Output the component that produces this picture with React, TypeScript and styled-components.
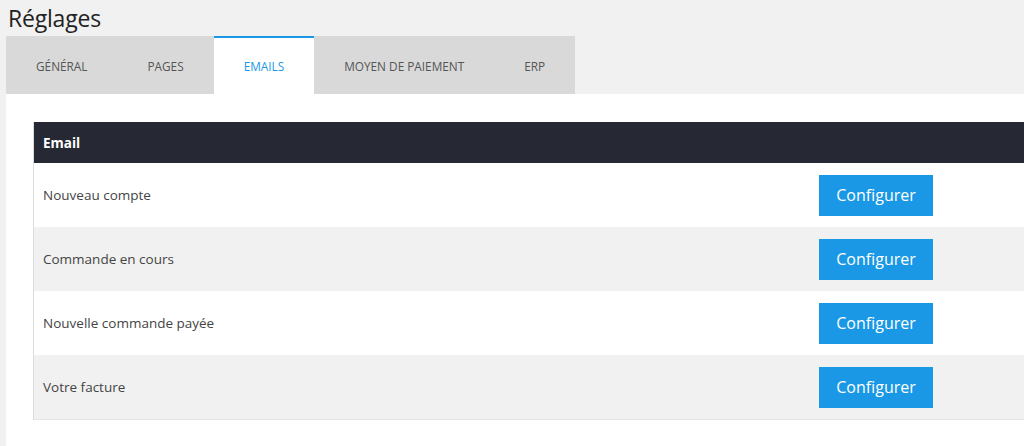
import styled, { createGlobalStyle } from "styled-components";

const GlobalStyle = createGlobalStyle`
  html, body {
    margin: 0;
    padding: 0;
    background: #f1f1f1;
    overflow: hidden;
  }
  body {
    font-family: "Open Sans", "Noto Sans", "Liberation Sans", sans-serif;
    color: #444;
  }
`;

const tabs = ["Général", "Pages", "Emails", "Moyen de paiement", "ERP"];

const emails = [
  "Nouveau compte",
  "Commande en cours",
  "Nouvelle commande payée",
  "Votre facture",
];

const App = () => {
  return (
    <>
      <GlobalStyle />
      <Page>
        <Title>Réglages</Title>

        <TabBar>
          {tabs.map((tab) => (
            <Tab key={tab} $active={tab === "Emails"}>
              {tab}
            </Tab>
          ))}
        </TabBar>

        <Panel>
          <Table>
            <HeaderRow>
              <HeaderCell>Email</HeaderCell>
              <HeaderCell />
            </HeaderRow>
            {emails.map((label, i) => (
              <Row key={label} $odd={i % 2 === 1}>
                <Cell>{label}</Cell>
                <Cell>
                  <ConfigButton type="button">Configurer</ConfigButton>
                </Cell>
              </Row>
            ))}
          </Table>
        </Panel>
      </Page>
    </>
  );
};

export default App;

const Page = styled.div`
  display: flex;
  flex-direction: column;
  padding: 0 0 0 6px;
  min-height: 446px;
`;

const Title = styled.h1`
  margin: 0;
  padding: 4px 0 0 2px;
  height: 36px;
  box-sizing: border-box;
  font-size: 23px;
  font-weight: 400;
  line-height: 28px;
  color: #222;
  letter-spacing: -0.2px;
`;

const TabBar = styled.div`
  display: flex;
  align-self: flex-start;
  background: #d9d9d9;
`;

const Tab = styled.div<{ $active?: boolean }>`
  height: 58px;
  box-sizing: border-box;
  padding: 0 30px;
  display: flex;
  align-items: center;
  font-size: 11.8px;
  text-transform: uppercase;
  color: ${(p) => (p.$active ? "#1a98e6" : "#555")};
  background: ${(p) => (p.$active ? "#fff" : "transparent")};
  border-top: 2px solid ${(p) => (p.$active ? "#1a98e6" : "transparent")};
`;

const Panel = styled.div`
  flex: 1;
  background: #fff;
  padding: 28px 0 27px 27px;
`;

const Table = styled.div`
  border-left: 1px solid #dcdcdc;
  border-bottom: 1px solid #e4e4e4;
`;

const HeaderRow = styled.div`
  display: grid;
  grid-template-columns: 1fr 215px;
  height: 41px;
  background: #262833;
`;

const HeaderCell = styled.div`
  display: flex;
  align-items: center;
  padding: 0 9px;
  font-size: 13.5px;
  font-weight: 700;
  color: #fff;
`;

const Row = styled.div<{ $odd?: boolean }>`
  display: grid;
  grid-template-columns: 1fr 215px;
  height: 64px;
  background: ${(p) => (p.$odd ? "#f1f1f1" : "#fff")};
`;

const Cell = styled.div`
  display: flex;
  align-items: center;
  padding: 0 9px;
  font-size: 13.5px;
  color: #444;

  &:last-child {
    padding-left: 10px;
  }
`;

const ConfigButton = styled.button`
  width: 114px;
  height: 41px;
  border: none;
  border-radius: 0;
  background: #1a98e6;
  color: #fff;
  font-family: inherit;
  font-size: 16px;
  cursor: pointer;
`;
